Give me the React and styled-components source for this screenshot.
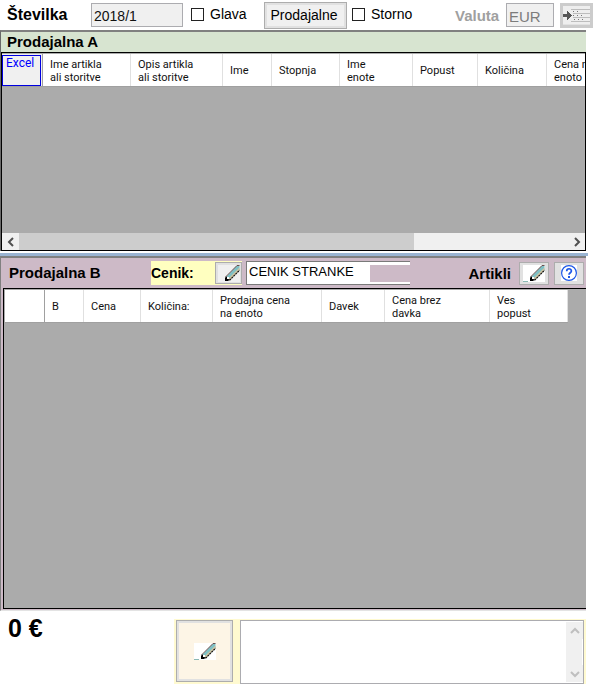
import React from "react";
import styled, { createGlobalStyle } from "styled-components";

const GlobalStyle = createGlobalStyle`
  *, *::before, *::after { box-sizing: border-box; }
  body {
    margin: 0;
    background: #fff;
    color: #000;
    font-family: "Liberation Sans", Arial, sans-serif;
    font-size: 14px;
  }
  button, input, select, textarea { font: inherit; color: inherit; margin: 0; border-radius: 0; }
`;

const Page = styled.main`
  display: flex;
  flex-direction: column;
  min-height: 100vh;
  overflow: hidden;
`;

const Toolbar = styled.header`
  display: flex;
  align-items: center;
  height: 30px;
  padding-left: 7px;
`;

const FieldLabel = styled.label`
  font-weight: bold;
  font-size: ${(p) => (p.$muted ? "15px" : "16px")};
  color: ${(p) => (p.$muted ? "#a0a0a0" : "#000")};
  width: ${(p) => (p.$muted ? "51px" : "84px")};
  flex: none;
  margin-left: ${(p) => (p.$muted ? "auto" : "0")};
`;

const TextField = styled.input`
  width: ${(p) => p.$width};
  height: 24px;
  padding: 2px 2px 0;
  border: 1px solid #acacb0;
  background: #f0f0f0;
  font-size: ${(p) => (p.disabled ? "15px" : "14px")};
  color: ${(p) => (p.disabled ? "#7c7c7c" : "#111")};
`;

const CheckLabel = styled.label`
  display: flex;
  align-items: center;
  gap: 6px;
  width: ${(p) => p.$width};
  margin-left: ${(p) => p.$gap};
  padding-bottom: 2px;
  flex: none;
`;

const Checkbox = styled.input.attrs({ type: "checkbox" })`
  appearance: none;
  width: 13px;
  height: 13px;
  border: 1px solid #222;
  background: #fff;
  &:checked { background: #333; }
`;

const PushButton = styled.button`
  width: 83px;
  height: 27px;
  padding: 0 3px 0 0;
  border: 1px solid #adadad;
  box-shadow: inset 0 0 0 2px #e1e1e1;
  background: #f0f0f0;
`;

const IconButton = styled.button`
  display: flex;
  align-items: center;
  justify-content: center;
  flex: none;
  width: ${(p) => p.$width};
  height: ${(p) => p.$height || "23px"};
  padding: 0;
  border: ${(p) => (p.$flat ? "3px solid #cccccc" : "1px solid #adadad")};
  background: ${(p) => p.$fill || "#e1e1e1"};
  box-shadow: ${(p) => (p.$ring ? "inset 0 0 0 2px #e1e1e1" : "none")};
`;

const ToolbarEnd = styled.div`
  display: flex;
  margin-left: 6px;
`;

const PanelA = styled.section`
  margin-right: 7px;
  border-top: 2px solid #808080;
  border-left: 1px solid #696969;
  background: #d7e4d0;
`;

const PanelB = styled.section`
  display: flex;
  flex-direction: column;
  flex: 1;
  margin-right: 7px;
  padding: 0 0 1px 2px;
  border: solid #808080;
  border-width: 2px 0 0 1px;
  border-bottom: 1px solid #e3e3e3;
  background: #cdbac7;
`;

const PanelTitle = styled.h2`
  margin: 0;
  padding-left: 6px;
  font-size: 15px;
  line-height: 20px;
`;

const GridFrame = styled.div`
  display: flex;
  flex-direction: column;
  flex: 1;
  min-height: ${(p) => p.$minHeight};
  border: 1px solid #000;
  border-right-width: ${(p) => (p.$open ? "0" : "1px")};
  padding: ${(p) => (p.$open ? "1px 0 0 1px" : "1px 0 0 0")};
  background: #ababab;
  overflow: hidden;
`;

const Table = styled.table`
  table-layout: fixed;
  flex: none;
  width: ${(p) => p.$width}px;
  border-collapse: separate;
  border-spacing: 0;
  background: #fff;
  border-bottom: 1px solid #a0a0a0;
`;

const HeadCell = styled.th`
  width: ${(p) => p.$width}px;
  height: 32px;
  padding: 1px 0 0 7px;
  border-right: 1px solid ${(p) => (p.$dark ? "#a0a0a0" : "#e0e0e0")};
  font-family: Roboto, sans-serif;
  font-size: 11px;
  font-weight: normal;
  line-height: 13px;
  text-align: left;
  white-space: pre;
  color: #111;
`;

const CornerCell = styled(HeadCell)`
  padding: 0;
  background: ${(p) => (p.$plain ? "#fff" : "#f0f0f0")};
`;

const ExcelButton = styled.button`
  display: block;
  width: 39px;
  height: 31px;
  padding: 0 0 15px 3px;
  border: 1px solid #0000e0;
  background: #f0f0f0;
  color: #0000ff;
  font-family: Roboto, sans-serif;
  font-size: 12px;
  line-height: 14px;
  text-align: left;
`;

const ScrollBar = styled.div`
  display: flex;
  height: 17px;
  margin-top: auto;
  background: #f0f0f0;
`;

const ScrollButton = styled.button`
  display: flex;
  align-items: center;
  justify-content: center;
  flex: none;
  width: 17px;
  height: 17px;
  padding: 0;
  border: 0;
  background: #f0f0f0;
`;

const ScrollTrack = styled.div`
  flex: 1;
`;

const ScrollThumb = styled.div`
  width: 72%;
  height: 100%;
  background: #cdcdcd;
`;

const Splitter = styled.div`
  height: 3px;
  margin: 2px 5px 0 0;
  background: #9ab4d2;
`;

const PanelBar = styled.div`
  display: flex;
  align-items: center;
  height: 30px;
  padding-right: 2px;
`;

const PanelBarTitle = styled(PanelTitle)`
  width: 148px;
  flex: none;
`;

const PriceList = styled.div`
  display: flex;
  align-items: center;
  justify-content: space-between;
  width: 91px;
  height: 24px;
  background: #ffffc0;
`;

const BarLabel = styled.label`
  font-weight: bold;
  font-size: ${(p) => (p.$large ? "15px" : "14px")};
  margin-left: ${(p) => (p.$large ? "auto" : "0")};
  margin-right: ${(p) => (p.$large ? "8px" : "0")};
`;

const Combo = styled.div`
  display: flex;
  align-items: center;
  width: 164px;
  height: 24px;
  margin-left: 4px;
  border: 1px solid #7a7a7a;
  border-right: 0;
  background: #fff;
`;

const ComboSelect = styled.select`
  appearance: none;
  width: 123px;
  height: 22px;
  padding: 0 0 3px 2px;
  border: 0;
  background: #fff;
  font-size: 13px;
`;

const ComboCover = styled.div`
  flex: 1;
  height: 17px;
  background: #cdbac7;
`;

const ButtonPair = styled.div`
  display: flex;
  gap: 5px;
`;

const Footer = styled.footer`
  display: flex;
  height: 73px;
  padding: 8px 7px 0 8px;
`;

const Total = styled.output`
  width: 166px;
  flex: none;
  font-size: 25px;
  line-height: 18px;
  font-weight: bold;
`;

const NoteArea = styled.div`
  display: flex;
  flex: 1;
  gap: 7px;
  padding: 1px 2px 0;
  background: #fffad0;
`;

const NoteFrame = styled.div`
  display: flex;
  flex: 1;
  min-width: 0;
  height: 64px;
  padding: 1px;
  border: 1px solid #acacb0;
  background: #fff;
`;

const NoteText = styled.textarea`
  flex: 1;
  min-width: 0;
  border: 0;
  outline: 0;
  resize: none;
  overflow: hidden;
`;

const VerticalScroll = styled.div`
  display: flex;
  flex-direction: column;
  justify-content: space-between;
  width: 16px;
  background: #f0f0f0;
`;

const turns = { left: "M6 1 L2 5 L6 9", right: "M2 1 L6 5 L2 9", up: "M1 6 L5 2 L9 6", down: "M1 2 L5 6 L9 2" };

function Chevron({ direction, color = "#505050" }) {
  const vertical = direction === "up" || direction === "down";
  return (
    <svg width={vertical ? 10 : 8} height={vertical ? 8 : 10} aria-hidden="true">
      <path d={turns[direction]} fill="none" stroke={color} strokeWidth="2" />
    </svg>
  );
}

function Pencil({ dash, backdrop = "#fff" }) {
  return (
    <svg width="22" height="17" viewBox="0 0 22 17" aria-hidden="true">
      <rect width="22" height="17" fill={backdrop} />
      {dash && <path d="M0 16.5H5" stroke="#8ab8b4" />}
      <path d="M8 12 L19 0.5 H21.5 V5 L12 15 Z" fill="#7fc0c4" />
      <path d="M10.5 13.5 L21.5 2.5 V5 L12 15 Z" fill="#cfc3a0" />
      <path d="M7.5 12 L19 0.5 H21.5" fill="none" stroke="#63403e" strokeWidth="0.9" />
      <path d="M11.5 15.3 L21.6 5.2" stroke="#111" strokeWidth="1.2" strokeDasharray="2 0.8" />
      <path d="M8 11.5 L7 13 V16 H10 L12 14.5 L10 14 L9 12 Z" fill="#000" />
      <rect x="9" y="12" width="2" height="2" fill="#fff" />
    </svg>
  );
}

function HelpIcon() {
  return (
    <svg width="18" height="18" viewBox="0 0 18 18" aria-hidden="true">
      <rect x="1" y="1" width="16" height="16" fill="#fff" />
      <circle cx="9" cy="9" r="7.4" fill="#fff" stroke="#1d57e8" strokeWidth="1.2" />
      <path d="M6.7 7.2 C6.7 4 11.4 4 11.4 7 C11.4 8.7 9 8.8 9 10.8" fill="none" stroke="#1d57e8" strokeWidth="1.7" />
      <rect x="8" y="12" width="2" height="2" fill="#1d57e8" />
    </svg>
  );
}

function InsertRowsIcon() {
  return (
    <svg width="27" height="18" viewBox="0 0 27 18" shapeRendering="crispEdges" aria-hidden="true">
      <rect width="27" height="18" fill="#eeeeee" />
      <path d="M8 3.5H27M10 7.5H27M10 11.5H27M8 15.5H27" stroke="#bdbdbd" />
      <path d="M10 5.5H18M10 9.5H20M11 13.5H21" stroke="#777" strokeDasharray="1 3" />
      <path d="M0 8H4V5L9 9.5L4 14V11H0Z" fill="#555" />
    </svg>
  );
}

const columnsA = [
  ["Ime artikla\nali storitve", 88],
  ["Opis artikla\nali storitve", 92],
  ["Ime", 49],
  ["Stopnja", 68],
  ["Ime\nenote", 73],
  ["Popust", 65],
  ["Količina", 69],
  ["Cena na\nenoto", 240],
];

const columnsB = [
  ["B", 39],
  ["Cena", 57],
  ["Količina:", 72],
  ["Prodajna cena\nna enoto", 109],
  ["Davek", 63],
  ["Cena brez\ndavka", 105],
  ["Ves\npopust", 78],
];

function HeaderCells({ columns }) {
  return columns.map(([title, width]) => (
    <HeadCell key={title} scope="col" $width={width}>{title}</HeadCell>
  ));
}

export default function App() {
  return (
    <Page>
      <GlobalStyle />
      <Toolbar>
        <FieldLabel htmlFor="number">Številka</FieldLabel>
        <TextField id="number" $width="92px" defaultValue="2018/1" />
        <CheckLabel $gap="8px" $width="73px"><Checkbox />Glava</CheckLabel>
        <PushButton type="button">Prodajalne</PushButton>
        <CheckLabel $gap="5px" $width="66px"><Checkbox />Storno</CheckLabel>
        <FieldLabel $muted htmlFor="currency">Valuta</FieldLabel>
        <TextField id="currency" $width="48px" defaultValue="EUR" disabled />
        <ToolbarEnd>
          <IconButton type="button" aria-label="Vstavi vrstice" $width="33px" $height="25px" $flat>
            <InsertRowsIcon />
          </IconButton>
        </ToolbarEnd>
      </Toolbar>

      <PanelA>
        <PanelTitle>Prodajalna A</PanelTitle>
        <GridFrame $minHeight="199px">
          <Table $width={785}>
            <thead>
              <tr>
                <CornerCell scope="col" $width={41} $dark><ExcelButton type="button">Excel</ExcelButton></CornerCell>
                <HeaderCells columns={columnsA} />
              </tr>
            </thead>
          </Table>
          <ScrollBar>
            <ScrollButton type="button" aria-label="Levo"><Chevron direction="left" /></ScrollButton>
            <ScrollTrack><ScrollThumb /></ScrollTrack>
            <ScrollButton type="button" aria-label="Desno"><Chevron direction="right" /></ScrollButton>
          </ScrollBar>
        </GridFrame>
      </PanelA>

      <Splitter />

      <PanelB>
        <PanelBar>
          <PanelBarTitle>Prodajalna B</PanelBarTitle>
          <PriceList>
            <BarLabel htmlFor="price-list">Cenik:</BarLabel>
            <IconButton type="button" aria-label="Uredi cenik" $width="27px" $height="22px"><Pencil backdrop="#f0f0f0" /></IconButton>
          </PriceList>
          <Combo>
            <ComboSelect id="price-list"><option>CENIK STRANKE</option></ComboSelect>
            <ComboCover />
          </Combo>
          <BarLabel as="span" $large>Artikli</BarLabel>
          <ButtonPair>
            <IconButton type="button" aria-label="Uredi artikle" $width="30px"><Pencil dash /></IconButton>
            <IconButton type="button" aria-label="Pomoč" $width="30px"><HelpIcon /></IconButton>
          </ButtonPair>
        </PanelBar>
        <GridFrame $open $minHeight="180px">
          <Table $width={563}>
            <thead>
              <tr>
                <CornerCell as="td" $width={40} $dark $plain />
                <HeaderCells columns={columnsB} />
              </tr>
            </thead>
          </Table>
        </GridFrame>
      </PanelB>

      <Footer>
        <Total>0 €</Total>
        <NoteArea>
          <IconButton type="button" aria-label="Uredi opombo" $width="57px" $height="62px" $fill="#fdf5e6" $ring>
            <Pencil dash />
          </IconButton>
          <NoteFrame>
            <NoteText aria-label="Opomba" />
            <VerticalScroll>
              <ScrollButton type="button" aria-label="Gor"><Chevron direction="up" color="#bfbfbf" /></ScrollButton>
              <ScrollButton type="button" aria-label="Dol"><Chevron direction="down" color="#bfbfbf" /></ScrollButton>
            </VerticalScroll>
          </NoteFrame>
        </NoteArea>
      </Footer>
    </Page>
  );
}
